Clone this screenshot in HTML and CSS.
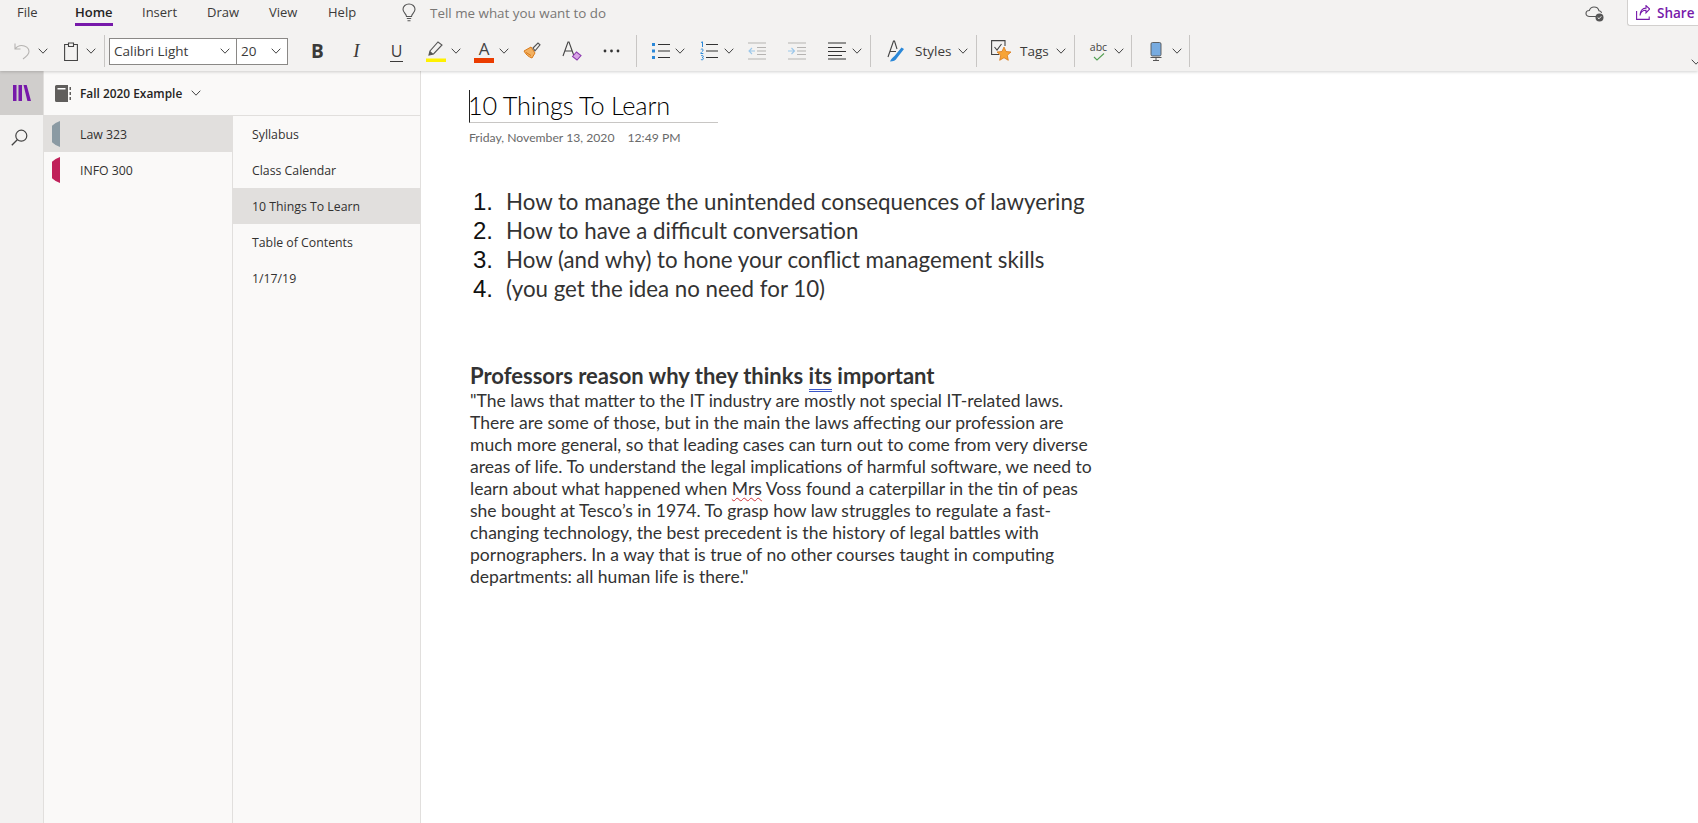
FILE: index.html
```html
<!DOCTYPE html>
<html>
<head>
    <title>OneNote - 10 Things To Learn</title>
    <link rel="stylesheet" href="styles.css">
</head>
<body>
    <svg class="defs" width="0" height="0">
        <symbol id="chev" viewBox="0 0 10 6"><path d="M.7.7 5 5.2 9.3.7" fill="none" stroke="#444" stroke-width="1"/></symbol>
    </svg>

    <div class="ribbon">
        <div class="tabs">
            <span class="tab tab-file">File</span>
            <span class="tab tab-home">Home</span>
            <span class="tab tab-insert">Insert</span>
            <span class="tab tab-draw">Draw</span>
            <span class="tab tab-view">View</span>
            <span class="tab tab-help">Help</span>
            <svg class="bulb" width="14" height="20" viewBox="0 0 14 20"><path d="M4.5 13.5C4.300 11 1 9.500 1 6.300 1 3.200 3.700 1 7 1s6 2.200 6 5.300c0 3.200-3.300 4.700-3.500 7.200zM4.800 15.500h4.400M5.500 17.800h3" fill="none" stroke="#555" stroke-width="1.100"/></svg>
            <span class="tell">Tell me what you want to do</span>
            <div class="top-right">
                <svg class="cloud" width="20" height="16" viewBox="0 0 20 16"><path d="M11 10.500H4.500C2.500 10.500 1 9.300 1 7.500s1.500-3 3.300-3C5 2.500 6.800 1 9 1c2.500 0 4.500 1.500 5 3.800 1.300.2 2.300 1 2.600 2" fill="none" stroke="#555" stroke-width="1.100"/><circle cx="14.500" cy="11.500" r="4" fill="#555"/><path d="M12.700 11.500l1.300 1.300 2.300-2.500" fill="none" stroke="#fff" stroke-width=".9"/></svg>
                <div class="share">
                    <svg width="14" height="15" viewBox="0 0 14 15"><path d="M.6 6v8.400h12.600v-3M4 10.500C4.500 7 7 5.200 10 5.200V7.800L13.700 4 10 .6v2.500C6.500 3.100 4 6 4 10.500z" fill="none" stroke="#7719aa" stroke-width="1.100"/></svg>
                    <span>Share</span>
                </div>
            </div>
        </div>
        <div class="tools">
            <svg class="ml14" width="17" height="18" viewBox="0 0 17 18"><path d="M1 1.500V7h5.500M1.200 7C3 4.500 5 3.500 7.500 3.500c4 0 7.500 2.500 7.500 6 0 2.700-2.500 5-6 7.500" fill="none" stroke="#b5b3b1" stroke-width="1.100"/></svg>
            <svg class="chev ml7"><use href="#chev"/></svg>
            <svg class="ml16" width="14" height="19" viewBox="0 0 14 19"><path d="M4.500 2.500H.6v16h12.800v-16H9.500M4.500 1h5v3.500h-5z" fill="none" stroke="#444" stroke-width="1.100"/></svg>
            <svg class="chev ml8"><use href="#chev"/></svg>
            <span class="sep ml8"></span>

            <div class="font-box ml4">
                <div class="font-name"><span>Calibri Light</span><svg class="chev"><use href="#chev"/></svg></div>
                <div class="font-size"><span>20</span><svg class="chev"><use href="#chev"/></svg></div>
            </div>

            <span class="fmt fmt-b">B</span>
            <span class="fmt fmt-i">I</span>
            <span class="fmt fmt-u">U</span>
            <svg class="ml23" width="20" height="22" viewBox="0 0 20 22"><path d="M3 15l1-4L12 2l4 3-8.500 9z" fill="none" stroke="#555" stroke-width="1.100"/><path d="M3 15l1-4 3.500 3z" fill="#555"/><rect y="18.500" width="20" height="3.500" fill="#fff100"/></svg>
            <svg class="chev ml5"><use href="#chev"/></svg>
            <div class="color-a ml13"><span>A</span><i></i></div>
            <svg class="chev ml5"><use href="#chev"/></svg>
            <svg class="ml14" width="18" height="18" viewBox="0 0 18 18"><path d="M1 9l7-4 4 6-3 5C6 15 3 13 1 9z" fill="#f2b060" stroke="#d97a1a" stroke-width="1"/><path d="M3 10.500l5 3" stroke="#d97a1a"/><path d="M10 6l5-5 2 1.800-5 6z" fill="none" stroke="#555" stroke-width="1.100"/></svg>
            <svg class="ml21" width="20" height="20" viewBox="0 0 20 20"><path d="M1 15L6 1h1l5 14M3 10h7" fill="none" stroke="#444" stroke-width="1.100"/><path d="M10.500 15.500l4-4.500 4.500 3.500-4 4.500z" fill="#d9a5e6" stroke="#8e3cb0" stroke-width="1.100"/></svg>
            <svg class="ml21" width="17" height="4" viewBox="0 0 17 4"><circle cx="2" cy="2" r="1.400" fill="#333"/><circle cx="8.500" cy="2" r="1.400" fill="#333"/><circle cx="15" cy="2" r="1.400" fill="#333"/></svg>
            <span class="sep ml16"></span>

            <svg class="ml15" width="18" height="18" viewBox="0 0 18 18"><path d="M0 1h3v3H0zM0 7.500h3v3H0zM0 14h3v3H0z" fill="#2b88d8"/><path d="M6 2.500h12M6 9h12M6 15.500h12" stroke="#333" stroke-width="1.100"/></svg>
            <svg class="chev ml5"><use href="#chev"/></svg>
            <svg class="ml15" width="18" height="20" viewBox="0 0 18 20"><path d="M1 1.500L2.500.8V6M.8 8.500c1-1 2.500-.5 2.300.7C3 10.300 1 11 .8 12.500h2.500M1 14.800c1-.6 2.400-.4 2.300.8 0 .6-.6.900-1.200.9.800 0 1.300.5 1.300 1.100 0 1.200-1.500 1.500-2.500.8" fill="none" stroke="#2b88d8"/><path d="M6 3.500h12M6 10h12M6 16.500h12" stroke="#333" stroke-width="1.100"/></svg>
            <svg class="chev ml6"><use href="#chev"/></svg>
            <svg class="ml14" width="18" height="18" viewBox="0 0 18 18"><path d="M0 1h18M9 5.500h9M9 9h9M9 12.500h9M0 17h18" stroke="#b5b3b1" stroke-width="1.100"/><path d="M7 9H1M4 6L1 9l3 3" fill="none" stroke="#9cc7ea" stroke-width="1.100"/></svg>
            <svg class="ml22" width="18" height="18" viewBox="0 0 18 18"><path d="M0 1h18M9 5.500h9M9 9h9M9 12.500h9M0 17h18" stroke="#b5b3b1" stroke-width="1.100"/><path d="M0 9h6M3.500 6l3 3-3 3" fill="none" stroke="#9cc7ea" stroke-width="1.100"/></svg>
            <svg class="ml22" width="18" height="18" viewBox="0 0 18 18"><path d="M0 1h18M0 5.500h14M0 9.500h18M0 13.500h14M0 17h18" stroke="#333" stroke-width="1.100"/></svg>
            <svg class="chev ml6"><use href="#chev"/></svg>
            <span class="sep ml8"></span>

            <svg class="ml16" width="18" height="22" viewBox="0 0 18 22"><path d="M1 17L6.500 1h1L10 9M3 11.500h6" fill="none" stroke="#444" stroke-width="1.100"/><path d="M3 21.500c3 0 6-1 7-3.500l7-9-2.500-1.500-7 8.500c-2 1.500-3.500 3-4.500 5.500z" fill="#2b88d8"/></svg>
            <span class="tool-text w36 ml10">Styles</span>
            <svg class="chev ml7"><use href="#chev"/></svg>
            <span class="sep ml8"></span>

            <svg class="ml14" width="20" height="22" viewBox="0 0 20 22"><path d="M8 14.500H.6V.6H14V6" fill="none" stroke="#444" stroke-width="1.100"/><path d="M3.500 7l2.500 3 4.500-6" fill="none" stroke="#444" stroke-width="1.100"/><path d="M13 7l2 4.500 5 .5-3.700 3.300 1 5-4.300-2.600-4.300 2.600 1-5L6 12l5-.5z" fill="#f7a437" stroke="#d97a1a" stroke-width=".8"/></svg>
            <span class="tool-text w29 ml9">Tags</span>
            <svg class="chev ml7"><use href="#chev"/></svg>
            <span class="sep ml8"></span>

            <div class="abc ml15"><span>abc</span><svg width="12" height="8" viewBox="0 0 12 8"><path d="M1 4l3 3 7-6.500" fill="none" stroke="#54a054" stroke-width="1.100"/></svg></div>
            <svg class="chev ml7"><use href="#chev"/></svg>
            <span class="sep ml7"></span>

            <svg class="ml18" width="12" height="19" viewBox="0 0 12 19"><rect x="1" y=".5" width="10" height="13.500" rx="1.500" fill="#77abe0" stroke="#555" stroke-width=".9"/><path d="M.5 15.500h11M6 15.500V18.500M3 18.500h6" stroke="#555" stroke-width="1"/></svg>
            <svg class="chev ml10"><use href="#chev"/></svg>
            <span class="sep ml7"></span>
            <svg class="chev ribbon-collapse"><use href="#chev"/></svg>
        </div>
    </div>

    <div class="main">
        <div class="rail">
            <div class="rail-btn rail-on">
                <svg width="18" height="16" viewBox="0 0 18 16"><path d="M0 0h3.500v16H0zM5.500 0H9v16H5.500zM10.500 0h3.200L18 16h-3.600z" fill="#7719aa"/></svg>
            </div>
            <div class="rail-btn rail-search">
                <svg width="17" height="17" viewBox="0 0 17 17"><circle cx="10.300" cy="6.700" r="5.500" fill="none" stroke="#444" stroke-width="1.200"/><path d="M6.300 10.700L.8 16.300" stroke="#444" stroke-width="1.300"/></svg>
            </div>
        </div>
        <div class="nav">
            <div class="notebook">
                <svg width="16" height="17" viewBox="0 0 16 17"><path d="M1.500 0H13v17H1.500A1.500 1.500 0 0 1 0 15.500v-14A1.500 1.500 0 0 1 1.500 0z" fill="#605e5c"/><path d="M2.500 3h8v1.500h-8z" fill="#fff"/><path d="M14.500 2H16v3h-1.500zM14.500 7H16v3h-1.500zM14.500 12H16v3h-1.500z" fill="#605e5c"/></svg>
                <span>Fall 2020 Example</span>
                <svg class="chev"><use href="#chev"/></svg>
            </div>
            <div class="lists">
                <div class="sections">
                    <div class="row row-on"><i class="sec-tab sec-gray"></i>Law 323</div>
                    <div class="row"><i class="sec-tab sec-red"></i>INFO 300</div>
                </div>
                <div class="pages">
                    <div class="row">Syllabus</div>
                    <div class="row">Class Calendar</div>
                    <div class="row row-on">10 Things To Learn</div>
                    <div class="row">Table of Contents</div>
                    <div class="row">1/17/19</div>
                </div>
            </div>
        </div>
        <div class="page">
            <div class="title-wrap"><h1 class="title">10 Things To Learn</h1></div>
            <div class="date"><span>Friday, November 13, 2020</span><span>12:49 PM</span></div>

            <ol class="things">
                <li><span class="num">1.</span>How to manage the unintended consequences of lawyering</li>
                <li><span class="num">2.</span>How to have a difficult conversation</li>
                <li><span class="num">3.</span>How (and why) to hone your conflict management skills</li>
                <li><span class="num">4.</span>(you get the idea no need for 10)</li>
            </ol>

            <h2 class="reason">Professors reason why they thinks <span class="grammar">its</span> important</h2>
            <p class="quote">"The laws that matter to the IT industry are mostly not special IT-related laws.<br>
            There are some of those, but in the main the laws affecting our profession are<br>
            much more general, so that leading cases can turn out to come from very diverse<br>
            areas of life. To understand the legal implications of harmful software, we need to<br>
            learn about what happened when <span class="spell">Mrs</span> Voss found a caterpillar in the tin of peas<br>
            she bought at Tesco’s in 1974. To grasp how law struggles to regulate a fast-<br>
            changing technology, the best precedent is the history of legal battles with<br>
            pornographers. In a way that is true of no other courses taught in computing<br>
            departments: all human life is there."</p>
        </div>
    </div>
</body>
</html>
```

FILE: styles.css
```css
html, body {
    height: 100%;
}

body {
    margin: 0;
    display: flex;
    flex-direction: column;
    overflow: hidden;
    font-family: "Open Sans", "Noto Sans", sans-serif;
    color: #252423;
    background-color: #fff;
}

svg {
    flex: none;
    display: block;
}

.defs {
    position: absolute;
}

.chev {
    width: 10px;
    height: 6px;
}

/* ribbon */
.ribbon {
    height: 71px;
    flex: none;
    background-color: #f3f2f1;
    box-shadow: 0 1px 3px rgba(0, 0, 0, 0.18);
    position: relative;
    z-index: 1;
}

.tabs {
    height: 34px;
    display: flex;
    align-items: flex-start;
    position: relative;
}

.tab {
    flex: none;
    font-size: 13px;
    line-height: 24px;
    height: 26px;
    color: #3b3a39;
    box-sizing: border-box;
}

.tab-file { margin-left: 17px; width: 21px; }
.tab-home { margin-left: 37px; width: 38px; font-weight: 600; color: #252423; border-bottom: 3px solid #7719aa; }
.tab-insert { margin-left: 29px; width: 36px; }
.tab-draw { margin-left: 29px; width: 32px; }
.tab-view { margin-left: 30px; width: 30px; }
.tab-help { margin-left: 29px; width: 30px; }

.bulb {
    margin: 3px 0 0 44px;
}

.tell {
    margin-left: 14px;
    font-size: 13.400px;
    line-height: 26px;
    color: #797775;
}

.top-right {
    margin-left: auto;
    display: flex;
    align-items: flex-start;
}

.cloud {
    margin: 6px 22px 0 0;
}

.share {
    width: 71px;
    height: 26px;
    box-sizing: border-box;
    display: flex;
    align-items: center;
    padding-left: 8px;
    gap: 7px;
    background-color: #fff;
    border: 1px solid #d2d0ce;
    border-top: none;
    border-right: none;
    border-radius: 0 0 0 3px;
    color: #7719aa;
    font-size: 13.500px;
    font-weight: 600;
}

.tools {
    height: 34px;
    display: flex;
    align-items: center;
    position: relative;
}

.sep {
    width: 1px;
    height: 32px;
    flex: none;
    background-color: #c8c6c4;
}

.ml4 { margin-left: 4px; }
.ml5 { margin-left: 5px; }
.ml6 { margin-left: 6px; }
.ml7 { margin-left: 7px; }
.ml8 { margin-left: 8px; }
.ml9 { margin-left: 9px; }
.ml10 { margin-left: 10px; }
.ml13 { margin-left: 13px; }
.ml14 { margin-left: 14px; }
.ml15 { margin-left: 15px; }
.ml16 { margin-left: 16px; }
.ml18 { margin-left: 18px; }
.ml21 { margin-left: 21px; }
.ml22 { margin-left: 22px; }
.ml23 { margin-left: 23px; }

.font-box {
    flex: none;
    width: 179px;
    height: 27px;
    box-sizing: border-box;
    display: flex;
    background-color: #fff;
    border: 1px solid #8a8886;
    font-size: 13.500px;
    color: #3b3a39;
}

.font-name, .font-size {
    display: flex;
    align-items: center;
    justify-content: space-between;
    padding: 0 6px 0 4px;
    box-sizing: border-box;
}

.font-name {
    width: 127px;
    border-right: 1px solid #8a8886;
}

.font-size {
    flex: 1;
}

.fmt {
    flex: none;
    font-family: "Liberation Serif", serif;
    font-size: 19px;
    line-height: 24px;
    color: #3b3a39;
    text-align: center;
}

.fmt-b {
    margin-left: 23px;
    width: 10px;
    font-family: "Open Sans", sans-serif;
    font-weight: 700;
    font-size: 19px;
}

.fmt-i {
    margin-left: 31px;
    width: 9px;
    font-style: italic;
}

.fmt-u {
    margin-left: 29px;
    width: 13px;
    font-family: "Open Sans", sans-serif;
    font-size: 16px;
    line-height: 20px;
    border-bottom: 1px solid #3b3a39;
}

.color-a {
    flex: none;
    width: 20px;
    display: flex;
    flex-direction: column;
    align-items: center;
    font-size: 17px;
    line-height: 18px;
    color: #444;
}

.color-a i {
    width: 20px;
    height: 5px;
    background-color: #eb3c00;
}

.tool-text {
    flex: none;
    font-size: 13.500px;
    color: #3b3a39;
}

.w36 { width: 36px; }
.w29 { width: 29px; }

.abc {
    flex: none;
    width: 17px;
    display: flex;
    flex-direction: column;
    align-items: center;
    font-size: 10.500px;
    line-height: 12px;
    color: #444;
}

.ribbon-collapse {
    position: absolute;
    right: -3px;
    top: 25px;
}

/* navigation panes */
.main {
    flex: 1;
    display: flex;
    min-height: 0;
}

.rail {
    width: 43px;
    flex: none;
    background-color: #f3f2f1;
    border-right: 1px solid #e1dfdd;
}

.rail-btn {
    height: 44px;
    display: flex;
    align-items: center;
    justify-content: center;
}

.rail-on {
    background-color: #d0cecc;
}

.rail-search {
    padding-right: 4px;
}

.nav {
    width: 376px;
    flex: none;
    display: flex;
    flex-direction: column;
    background-color: #faf9f8;
    border-right: 1px solid #e1dfdd;
}

.notebook {
    height: 45px;
    flex: none;
    box-sizing: border-box;
    display: flex;
    align-items: center;
    padding-left: 11px;
    border-bottom: 1px solid #e1dfdd;
    font-size: 11.900px;
    font-weight: 600;
    color: #252423;
}

.notebook span {
    margin: 0 9px 0 9px;
}

.lists {
    flex: 1;
    display: flex;
}

.sections {
    width: 188px;
    border-right: 1px solid #e1dfdd;
}

.pages {
    flex: 1;
}

.row {
    height: 36px;
    display: flex;
    align-items: center;
    font-size: 12.300px;
    color: #323130;
    position: relative;
}

.sections .row {
    padding-left: 36px;
}

.pages .row {
    padding-left: 19px;
}

.row-on {
    background-color: #e1dfdd;
}

.sec-tab {
    position: absolute;
    left: 8px;
    top: 5px;
    width: 8px;
    height: 26px;
    clip-path: polygon(100% 0, 100% 100%, 45% 92%, 0 82%, 0 18%, 45% 8%);
}

.sec-gray { background-color: #8b9aa3; }
.sec-red { background-color: #c0215a; }

/* page content */
.page {
    flex: 1;
    padding: 19px 0 0 48px;
    font-family: Lato, "Open Sans", sans-serif;
    color: #333;
}

.title-wrap {
    width: 249px;
    height: 33px;
    border-left: 1px solid #222;
    border-bottom: 1px solid #c8c6c4;
    box-sizing: border-box;
}

.title {
    margin: 0 0 0 -2px;
    font-size: 25.300px;
    font-weight: 300;
    line-height: 31px;
    color: #000;
    letter-spacing: -0.2px;
}

.date {
    margin-top: 7px;
    display: flex;
    gap: 13px;
    font-size: 12.200px;
    line-height: 16px;
    color: #6a6a6a;
}

.things {
    list-style: none;
    margin: 41px 0 0;
    padding: 0;
    font-size: 22.300px;
    line-height: 29px;
}

.things li {
    display: flex;
    white-space: nowrap;
}

.num {
    width: 37px;
    padding-left: 4px;
    box-sizing: border-box;
    flex: none;
    font-family: "Liberation Sans", sans-serif;
    font-size: 24px;
    color: #111;
}

.reason {
    margin: 59px 0 0 1px;
    font-size: 22px;
    font-weight: 700;
    line-height: 28px;
}

.grammar {
    border-bottom: 3px double #3a56c8;
}

.quote {
    margin: 0 0 0 1px;
    font-size: 17.550px;
    line-height: 22px;
    white-space: nowrap;
}

.spell {
    text-decoration: underline wavy #d13438;
    text-decoration-thickness: 1px;
    text-underline-offset: 2px;
}
```
